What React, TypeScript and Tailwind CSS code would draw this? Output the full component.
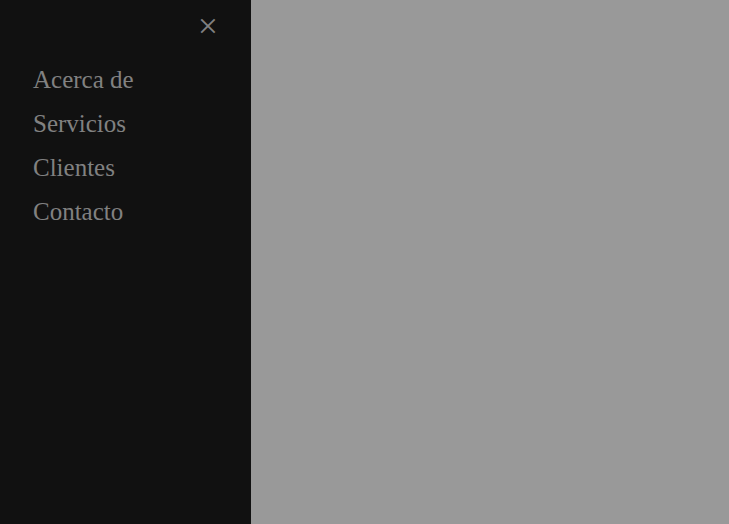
import React from "react";

export default function App() {
  const links = ["Acerca de", "Servicios", "Clientes", "Contacto"];
  return (
    <div className="flex h-[524px] w-[729px] bg-[#999999]" style={{ fontFamily: '"Liberation Serif", serif' }}>
      <div className="relative h-full w-[251px] shrink-0 bg-[#111111] pt-[58px]">
        <a className="absolute right-[25px] top-[-3px] block py-2 pl-8 pr-2 text-[36px] leading-[normal] text-[#818181] no-underline">
          ×
        </a>
        {links.map((l) => (
          <a
            key={l}
            className="block py-2 pl-[33px] pr-2 text-[25px] leading-[normal] text-[#818181] no-underline"
          >
            {l}
          </a>
        ))}
      </div>
      <div className="flex-1" />
    </div>
  );
}
